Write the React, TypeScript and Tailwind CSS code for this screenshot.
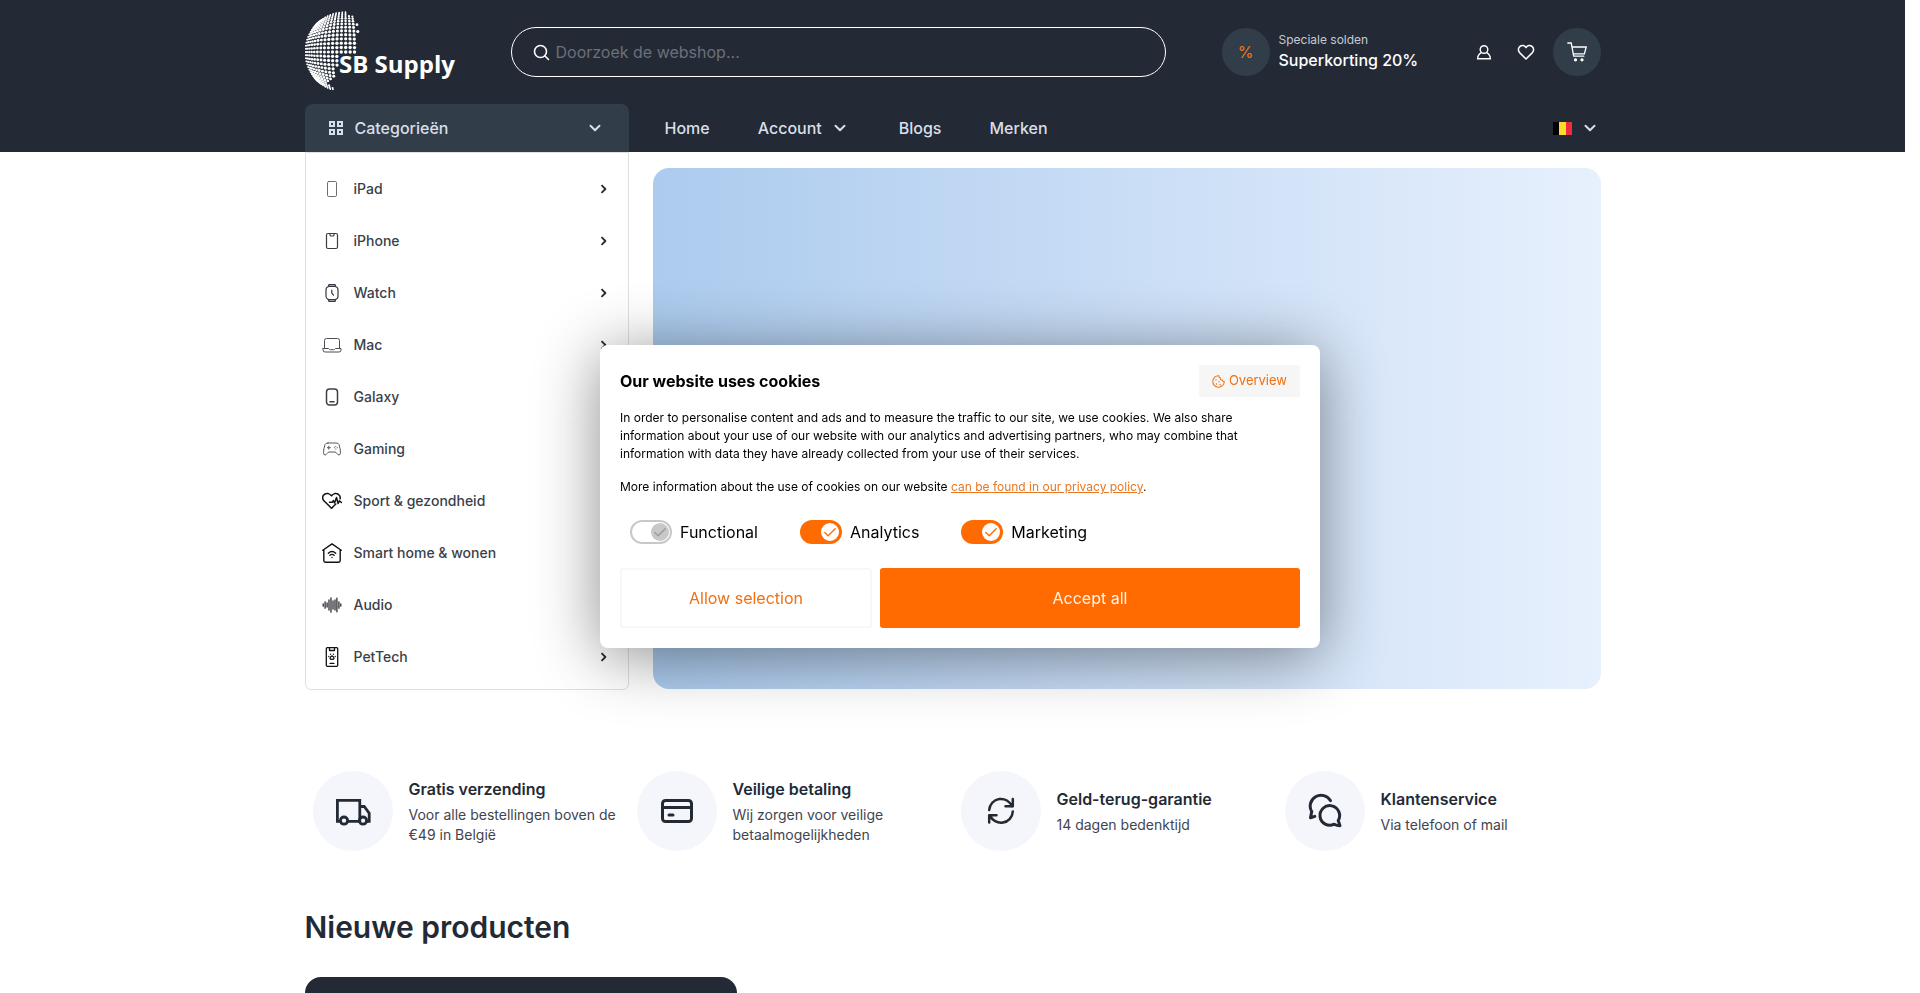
import type { ReactNode } from "react";

const RADIUS = 40;
const STEP = 6.4;

/* Right-hand coastline of the globe: [from y, right-most x] */
const COAST: [number, number][] = [
  [0, 42], [4, 48], [12, 52], [19, 56], [24, 48], [27, 53], [43, 36], [55, 34],
  [58, 31], [62, 29], [66, 26], [70, 23], [73, 25], [76, 28],
];

function coastAt(y: number) {
  let edge = 0;
  for (const [from, x] of COAST) if (y >= from) edge = x;
  return edge;
}

function globeDots() {
  const dots: { x: number; y: number; r: number }[] = [];
  for (let i = -14; i <= 5; i++) {
    for (let j = -14; j <= 14; j++) {
      const u = ((i * STEP + 1) * Math.PI) / 180;
      const v = (j * STEP * Math.PI) / 180;
      const a = Math.sin(u);
      const b = Math.sin(v);
      const x = RADIUS + RADIUS * a * Math.sqrt(1 - (b * b) / 2);
      const y = 41 + RADIUS * b * Math.sqrt(1 - (a * a) / 2);
      if (x > coastAt(y)) continue;
      const r = 0.65 + 1.05 * Math.min(Math.cos(u), Math.cos(v));
      dots.push({ x, y, r });
    }
  }
  return dots;
}

function Logo() {
  return (
    <svg width="152" height="82" viewBox="0 0 152 82" role="img" aria-label="SB Supply" className="block">
      {globeDots().map((d, i) => (
        <circle key={i} cx={d.x.toFixed(2)} cy={d.y.toFixed(2)} r={d.r.toFixed(2)} fill="#fff" />
      ))}
      <text x="34" y="62" fill="#fff" fontFamily="'Open Sans', sans-serif" fontWeight="700" fontSize="24">
        SB Supply
      </text>
    </svg>
  );
}

function Svg({ size = 20, sw = 1, children, className }: { size?: number; sw?: number; children: ReactNode; className?: string }) {
  return (
    <svg
      width={size}
      height={size}
      viewBox={`0 0 ${size} ${size}`}
      fill="none"
      stroke="currentColor"
      strokeWidth={sw}
      strokeLinecap="round"
      strokeLinejoin="round"
      aria-hidden="true"
      className={className}
    >
      {children}
    </svg>
  );
}

function ChevronDown() {
  return (
    <Svg size={12} sw={2}>
      <path d="M1.5 3.800 6 8.200l4.500-4.400" />
    </Svg>
  );
}

function ChevronRight() {
  return (
    <Svg size={10} sw={1.8}>
      <path d="M3.500 1.200 7.400 5 3.500 8.800" strokeLinecap="butt" />
    </Svg>
  );
}

const categories: { name: string; icon: ReactNode }[] = [
  {
    name: "iPad",
    icon: (
      <Svg sw={0.9} className="text-[#5b5f68]">
        <rect x="5.500" y="2.500" width="9" height="15" rx="1.200" />
      </Svg>
    ),
  },
  {
    name: "iPhone",
    icon: (
      <Svg sw={1.2} className="text-[#3a3c44]">
        <rect x="4.500" y="2.500" width="11" height="15" rx="1.500" />
        <path d="M8 2.500v1.200q0 1.300 1.300 1.300h1.400q1.300 0 1.300-1.300V2.500" />
      </Svg>
    ),
  },
  {
    name: "Watch",
    icon: (
      <Svg sw={1.2} className="text-[#33363e]">
        <path d="M6.500 3.500 7 1.500h6l.5 2zM6.500 16.500l.5 2h6l.5-2z" fill="#9aa0a8" />
        <rect x="4" y="3.500" width="12" height="13" rx="3.500" fill="#fff" />
        <path d="M9.800 7v3.200l1.700 2" />
      </Svg>
    ),
  },
  {
    name: "Mac",
    icon: (
      <Svg sw={1} className="text-[#4b4e56]">
        <path d="M2.500 13V5.500q0-2 2-2h11q2 0 2 2V13" />
        <path d="M1 13.500h5.500q.8 1.200 2 1.200h3q1.200 0 2-1.200H19v1.500q0 2-2 2H3q-2 0-2-2z" />
      </Svg>
    ),
  },
  {
    name: "Galaxy",
    icon: (
      <Svg sw={1.5} className="text-[#3d4049]">
        <rect x="4.500" y="2" width="11" height="16" rx="3" />
        <path d="M8 14.800h4" />
      </Svg>
    ),
  },
  {
    name: "Gaming",
    icon: (
      <Svg sw={1} className="text-[#55585f]">
        <path d="M6 4h8q2.500 0 3 1.600 1.500 4.400 1.500 8 0 2.400-1.600 2.400-1 0-1.700-1.200-1.200-1.800-2.200-1.800H7q-1 0-2.200 1.800Q4.100 16 3.100 16q-1.600 0-1.600-2.400 0-3.600 1.500-8Q3.500 4 6 4z" />
        <path d="M6.800 7.200v3M5.300 8.700h3M13.800 7.400v.2M13.800 10v.2M12.300 8.700h.2M15.300 8.700h.2" />
      </Svg>
    ),
  },
  {
    name: "Sport & gezondheid",
    icon: (
      <Svg sw={1.5} className="text-[#101216]">
        <path d="M9.500 17.200 1.900 9.800Q-.3 7 1.300 4.500 3.200 1.900 6.300 2.600q1.800.5 3.200 2.200 1.400-1.700 3.200-2.200 3.100-.6 4.900 2 .9 1.500.5 3.200" />
        <path d="m9.500 17.200 4.300-4.200M7.500 11.200h2.700l1.200-1.600 1.100 2.400 2-5.500 1.600 6 1.300-2.600 2.100 1.600" />
      </Svg>
    ),
  },
  {
    name: "Smart home & wonen",
    icon: (
      <Svg sw={1.4} className="text-[#101216]">
        <path d="M.8 7.300 10 .9l9.200 6.400M1.800 7v10.500q0 1.700 1.500 1.700h13.400q1.500 0 1.500-1.700V7" />
        <path d="M6.300 10.200q3.700-3.300 7.400 0M7.900 12.200q2.100-1.700 4.200 0M10 14.500v.1" />
      </Svg>
    ),
  },
  {
    name: "Audio",
    icon: (
      <Svg sw={1.3} className="text-[#2b2d32]">
        <path d="M1.200 8.800v2.400M3.100 6.800v6.400M5.100 8v4M7 5v10M9 2.800v14.400M11 6v8M13 5v10M14.900 3.200v13.600M16.900 6.800v6.400M18.800 8.800v2.400" />
      </Svg>
    ),
  },
  {
    name: "PetTech",
    icon: (
      <Svg sw={1.3} className="text-[#101216]">
        <rect x="4.300" y=".7" width="11.400" height="18.600" rx="1" />
        <path d="M7.500 1v2.500h5V1M8 16.300h4M10 8.800q1.800.8 2 2.700-.5 1-2 .8-1.500.2-2-.8.200-1.900 2-2.700zM6.800 9.300v.2M13.200 9.300v.2M8.600 7.200v.1M11.400 7.200v.1" />
      </Svg>
    ),
  },
];

const features: { title: string; text: string; icon: ReactNode }[] = [
  {
    title: "Gratis verzending",
    text: "Voor alle bestellingen boven de €49 in België",
    icon: (
      <Svg size={36} sw={2.8}>
        <path d="M6 28.400H2.400V7.400h22.400v21M12 28.400h12.800M24.800 13.500h4.400l5 6.600v8.300h-2.400" strokeLinejoin="miter" strokeLinecap="butt" />
        <circle cx="9" cy="27.600" r="3.600" />
        <circle cx="28" cy="27.600" r="3.600" />
      </Svg>
    ),
  },
  {
    title: "Veilige betaling",
    text: "Wij zorgen voor veilige betaalmogelijkheden",
    icon: (
      <Svg size={36} sw={3}>
        <rect x="3.500" y="7.500" width="29" height="21" rx="3" />
        <path d="M3.500 14.400h29M10 22h4" />
      </Svg>
    ),
  },
  {
    title: "Geld-terug-garantie",
    text: "14 dagen bedenktijd",
    icon: (
      <Svg size={36} sw={2.5}>
        <path d="M6.200 17a11.800 11.800 0 0 1 22.800-3.500M29.800 6v7.300h-7.300M29.800 18.500a11.800 11.800 0 0 1-22.800 3.700M6.200 29.500v-7.300h7.300" />
      </Svg>
    ),
  },
  {
    title: "Klantenservice",
    text: "Via telefoon of mail",
    icon: (
      <Svg size={36} sw={3}>
        <path d="M33 32.800 31.200 27.500A9.800 9.800 0 1 0 27.200 31.200q2.600 1.500 5.800 1.600z" />
        <path d="M23.400 7.600A10.200 10.200 0 0 0 4.700 18.600L3.500 24.800 7.800 23.400" />
      </Svg>
    ),
  },
];

function Toggle({ id, label, disabled }: { id: string; label: string; disabled?: boolean }) {
  return (
    <label htmlFor={id} className="flex items-center gap-2 text-base leading-6 text-black">
      <span className="relative flex h-6 w-[42px]">
        <input
          id={id}
          type="checkbox"
          defaultChecked
          disabled={disabled}
          className="h-6 w-[42px] appearance-none rounded-full bg-[#ff6b00] disabled:border-2 disabled:border-[#c8c8c8] disabled:bg-white"
        />
        <span
          className={
            disabled
              ? "pointer-events-none absolute top-[3px] right-[3px] flex size-[18px] items-center justify-center rounded-full bg-[#c8c8c8] text-[#999]"
              : "pointer-events-none absolute top-[3px] right-[3px] flex size-[18px] items-center justify-center rounded-full bg-white text-[#ff6b00]"
          }
        >
          <Svg size={14} sw={1.3}>
            <path d="M1.800 7.500 5.200 10.800 12.200 3.800" />
          </Svg>
        </span>
      </span>
      {label}
    </label>
  );
}

function CookieDialog() {
  return (
    <div className="pointer-events-none fixed inset-0 flex items-center justify-center">
      <section
        role="dialog"
        aria-labelledby="cookie-title"
        className="pointer-events-auto w-[720px] max-w-full rounded-lg bg-white p-5 text-black shadow-[0_8px_64px_rgba(0,0,0,0.45)]"
      >
        <div className="flex h-8 items-center justify-between">
          <h2 id="cookie-title" className="text-base font-bold">Our website uses cookies</h2>
          <button type="button" className="flex h-8 items-center gap-1 rounded-[2px] bg-[#f6f6f7] px-[13px] text-[13px] text-[#f07010]">
            <svg width="13" height="13" viewBox="0 0 14 14" fill="none" stroke="currentColor" strokeWidth="1.1" strokeLinecap="round" strokeLinejoin="round" aria-hidden="true">
              <path d="M7.500.8A6.200 6.200 0 1 0 13.200 7q-1.800.3-2.200-1.700-2.300.2-2-2Q7.200 3 7.500.8z" />
              <path d="M4.300 5v.2M4.800 9.500v.2M7.500 7.200v.2M8.800 10.200v.2" strokeWidth="1.400" />
            </svg>
            Overview
          </button>
        </div>
        <p className="mt-3 max-w-[640px] text-xs leading-[18px]">
          In order to personalise content and ads and to measure the traffic to our site, we use cookies. We also share
          information about your use of our website with our analytics and advertising partners, who may combine that
          information with data they have already collected from your use of their services.
        </p>
        <p className="mt-[15px] text-xs leading-[18px]">
          More information about the use of cookies on our website{" "}
          <a href="#privacy" className="text-[#e87722] underline">can be found in our privacy policy</a>.
        </p>
        <div className="mt-6 flex gap-[42px] pl-[10px]">
          <Toggle id="functional" label="Functional" disabled />
          <Toggle id="analytics" label="Analytics" />
          <Toggle id="marketing" label="Marketing" />
        </div>
        <div className="mt-6 grid grid-cols-[3fr_5fr] gap-2">
          <button type="button" className="h-[60px] rounded-[3px] border-2 border-[#f7f7f7] bg-white text-base text-[#f07010]">
            Allow selection
          </button>
          <button type="button" className="h-[60px] rounded-[3px] bg-[#ff6b00] text-base text-[#fff3e8]">
            Accept all
          </button>
        </div>
      </section>
    </div>
  );
}

function Header() {
  return (
    <header className="bg-[#232a35]">
      <div className="mx-auto max-w-[1320px] px-3">
        <div className="flex h-[104px] items-center">
          <a href="#home" className="w-[206px] shrink-0">
            <Logo />
          </a>
          <label className="flex h-[50px] flex-1 items-center rounded-full border border-white px-5 text-white">
            <Svg size={18} sw={1.6}>
              <circle cx="8.500" cy="8.500" r="6" />
              <path d="m13 13 3.500 3.500" />
            </Svg>
            <input
              type="search"
              aria-label="Doorzoek de webshop"
              placeholder="Doorzoek de webshop..."
              className="ml-[6px] flex-1 bg-transparent text-base outline-none placeholder:text-[#6b707a]"
            />
          </label>
          <a href="#solden" className="ml-14 flex w-[241px] shrink-0 items-center gap-[9px]">
            <span className="flex size-12 items-center justify-center rounded-full bg-[#323d4a] text-base text-[#f27612]">%</span>
            <span className="flex flex-col pb-1">
              <span className="text-xs leading-5 text-[#c3cad4]">Speciale solden</span>
              <span className="text-base leading-5 font-medium text-white">Superkorting 20%</span>
            </span>
          </a>
          <button type="button" aria-label="Account" className="flex w-[42px] justify-center text-white">
            <Svg size={16} sw={1.4}>
              <circle cx="8" cy="5.500" r="3.800" />
              <path d="M5.300 8.700Q1.800 10.700 1.600 14.700H14.400Q14.200 10.700 10.700 8.700" strokeLinejoin="miter" />
            </Svg>
          </button>
          <button type="button" aria-label="Favorieten" className="flex w-[42px] justify-center text-white">
            <Svg size={18} sw={1.5}>
              <path d="M9 16 2.600 9.600Q.6 7.200 2 4.500 3.500 2.200 6.200 2.600 7.900 3 9 4.600 10.100 3 11.800 2.600q2.700-.4 4.200 1.900 1.400 2.700-.6 5.100z" />
            </Svg>
          </button>
          <button type="button" aria-label="Winkelwagen" className="ml-[6px] flex size-12 items-center justify-center rounded-full bg-[#323d4a] text-white">
            <Svg size={20} sw={1.3}>
              <path d="M.8 1h3.400L6.700 14.200H16.800M4.900 5H19.200L17.400 11.900H6.200" strokeLinejoin="miter" />
              <circle cx="8.500" cy="17.800" r="1" fill="currentColor" />
              <circle cx="15" cy="17.800" r="1" fill="currentColor" />
            </Svg>
          </button>
        </div>
        <nav className="flex h-12 items-center text-base font-medium text-[#d8dfe9]">
          <button type="button" className="flex h-12 w-1/4 items-center gap-3 rounded-t-lg bg-[#323d4a] pr-7 pl-6">
            <Svg size={14} sw={2}>
              <path d="M1 1h4v4H1zM9 1h4v4H9zM1 9h4v4H1zM9 9h4v4H9z" strokeLinejoin="miter" />
            </Svg>
            <span className="flex-1 text-left">Categorieën</span>
            <ChevronDown />
          </button>
          <div className="ml-9 flex items-center gap-12">
            <a href="#home">Home</a>
            <a href="#account" className="mr-[5px] flex items-center gap-3">
              Account
              <ChevronDown />
            </a>
            <a href="#blogs">Blogs</a>
            <a href="#merken">Merken</a>
          </div>
          <button type="button" aria-label="Taal: België" className="mr-[5px] ml-auto flex items-center gap-3">
            <svg width="19" height="13" viewBox="0 0 19 13" aria-hidden="true">
              <rect width="19" height="13" fill="#ed2f3c" />
              <rect width="13" height="13" fill="#fbdb2b" />
              <rect width="6" height="13" fill="#000" />
            </svg>
            <ChevronDown />
          </button>
        </nav>
      </div>
    </header>
  );
}

export default function App() {
  return (
    <div className="h-screen overflow-y-auto bg-white pr-[15px] font-['Inter',sans-serif] text-[#232a35] [scrollbar-width:none]">
      <Header />
      <main className="mx-auto max-w-[1320px] px-3">
        <div className="flex">
          <ul className="w-1/4 rounded-b-md border border-[#dfe0e3] pt-[10px] pb-[6px]">
            {categories.map((c) => (
              <li key={c.name}>
                <a href="#categorie" className="flex h-[52px] items-center gap-3 pr-5 pl-4 text-sm font-medium text-[#3a3f4a]">
                  {c.icon}
                  <span className="flex-1">{c.name}</span>
                  <span className="text-[#232a35]">
                    <ChevronRight />
                  </span>
                </a>
              </li>
            ))}
          </ul>
          <div className="mt-4 mb-px ml-6 flex-1 rounded-2xl bg-linear-to-r from-[#accbee] to-[#e7f0fd]" />
        </div>

        <section className="mt-[81px] grid grid-cols-4">
          {features.map((f) => (
            <div key={f.title} className="flex items-center gap-4 px-2">
              <div className="flex size-20 shrink-0 items-center justify-center rounded-full bg-[#f4f6fb]">{f.icon}</div>
              <div>
                <h3 className="text-base leading-6 font-semibold">{f.title}</h3>
                <p className="mt-1 text-sm leading-5 text-[#3f4550]">{f.text}</p>
              </div>
            </div>
          ))}
        </section>

        <section className="mt-14">
          <h2 className="text-[30px] leading-10 font-semibold">Nieuwe producten</h2>
          <div className="mt-[30px] h-96 w-1/3 rounded-2xl bg-[#232a35]" />
        </section>
      </main>
      <CookieDialog />
    </div>
  );
}
